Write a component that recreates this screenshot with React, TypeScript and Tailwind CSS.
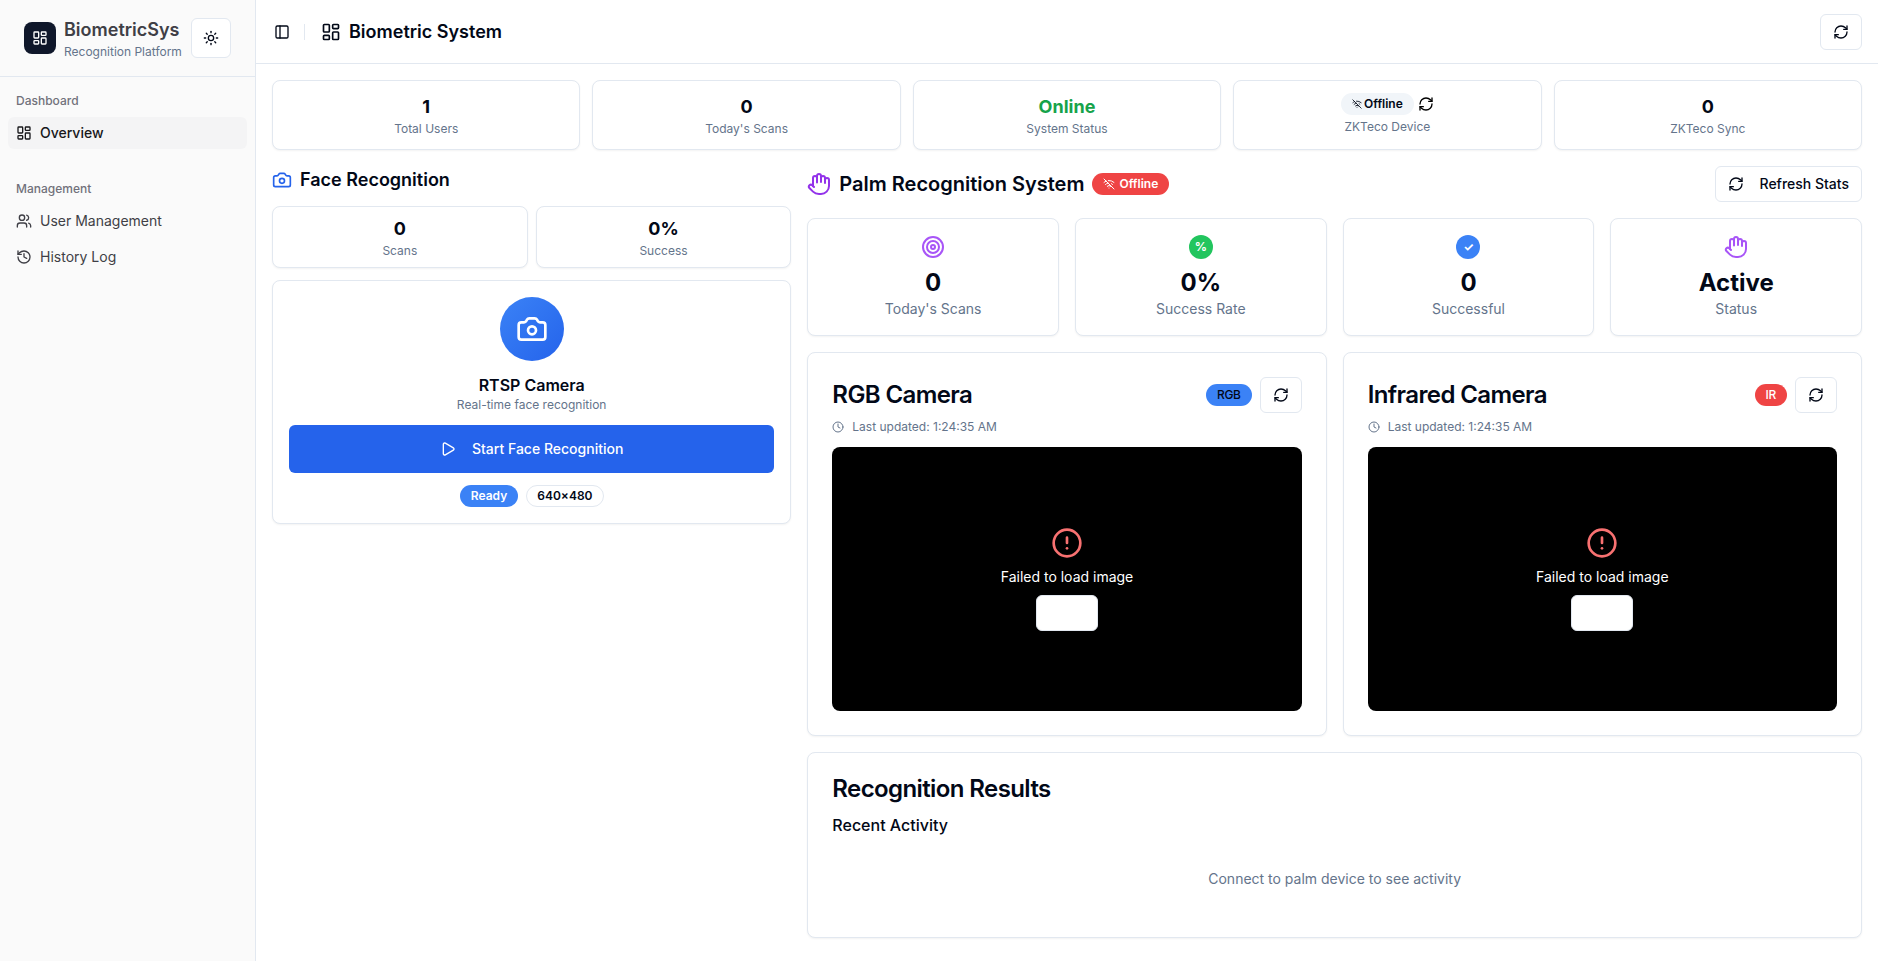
import React from "react";
import {
  AlertCircle,
  Camera,
  Clock,
  Hand,
  History,
  LayoutDashboard,
  PanelLeft,
  Play,
  RefreshCw,
  Sun,
  Target,
  Users,
  WifiOff,
} from "lucide-react";

const card = "rounded-lg border border-[#e2e8f0] bg-white shadow-[0_1px_2px_0_rgba(0,0,0,0.05)]";
const outlineBtn =
  "inline-flex h-9 items-center justify-center rounded-md border border-[#e2e8f0] bg-white px-3 text-sm font-medium text-[#020817]";

const Stat = ({ value, label, color = "text-[#020817]", pad = "p-3" }: { value: string; label: string; color?: string; pad?: string }) => (
  <div className={`${card} ${pad} text-center`}>
    <div className={`text-lg font-bold ${color}`}>{value}</div>
    <div className="text-xs text-[#64748b]">{label}</div>
  </div>
);

const PalmStat = ({ icon, value, label }: { icon: React.ReactNode; value: string; label: string }) => (
  <div className={`${card} flex flex-col items-center p-4`}>
    <div className="mb-2 flex h-6 items-center justify-center">{icon}</div>
    <div className="text-2xl font-bold text-[#020817]">{value}</div>
    <div className="text-sm text-[#64748b]">{label}</div>
  </div>
);

const CameraCard = ({ title, badge, badgeClass }: { title: string; badge: string; badgeClass: string }) => (
  <div className={`${card} p-6`}>
    <div className="flex items-center justify-between">
      <h3 className="text-2xl leading-none font-semibold tracking-tight text-[#020817]">{title}</h3>
      <div className="flex items-center gap-2">
        <span className={`rounded-full border border-transparent px-2.5 py-0.5 text-xs font-medium tracking-tight ${badgeClass}`}>{badge}</span>
        <button className={outlineBtn}>
          <RefreshCw className="h-4 w-4" />
        </button>
      </div>
    </div>
    <div className="mt-1.5 flex items-center gap-2 text-xs text-[#64748b]">
      <Clock className="h-3 w-3" />
      Last updated: 1:24:35 AM
    </div>
    <div className="mt-3 flex aspect-video flex-col items-center justify-center rounded-lg bg-black">
      <AlertCircle className="mb-2 h-8 w-8 text-[#f87171]" />
      <div className="mb-2 text-sm text-white">Failed to load image</div>
      <button className="h-9 w-[62px] rounded-md border border-[#e2e8f0] bg-white" />
    </div>
  </div>
);

const NavItem = ({ icon, label, active }: { icon: React.ReactNode; label: string; active?: boolean }) => (
  <div className={`flex h-8 items-center gap-2 rounded-md px-2 text-sm ${active ? "bg-[#f4f4f5] font-medium text-[#18181b]" : "text-[#3f3f46]"}`}>
    {icon}
    {label}
  </div>
);

const App = () => {
  return (
    <div className="flex min-h-screen bg-white font-['Inter',sans-serif] text-[#020817]">
      <aside className="w-64 shrink-0 border-r border-[#e2e8f0] bg-[#fafafa]">
        <div className="flex h-[77px] items-center justify-between border-b border-[#e2e8f0] pr-6 pb-px pl-6">
          <div className="flex items-center gap-2">
            <div className="flex h-8 w-8 items-center justify-center rounded-lg bg-[#0f172a] text-white">
              <LayoutDashboard className="h-4 w-4" />
            </div>
            <div>
              <div className="text-lg font-semibold text-[#3f3f46]">BiometricSys</div>
              <div className="text-xs text-[#64748b]">Recognition Platform</div>
            </div>
          </div>
          <button className="flex h-10 w-10 items-center justify-center rounded-md border border-[#e2e8f0] bg-white">
            <Sun className="h-4 w-4" />
          </button>
        </div>
        <div className="flex flex-col gap-2">
          <div className="p-2">
            <div className="flex h-8 items-center px-2 text-xs font-medium text-[#71717a]">Dashboard</div>
            <NavItem active icon={<LayoutDashboard className="h-4 w-4" />} label="Overview" />
          </div>
          <div className="p-2">
            <div className="flex h-8 items-center px-2 text-xs font-medium text-[#71717a]">Management</div>
            <div className="flex flex-col gap-1">
              <NavItem icon={<Users className="h-4 w-4" />} label="User Management" />
              <NavItem icon={<History className="h-4 w-4" />} label="History Log" />
            </div>
          </div>
        </div>
      </aside>

      <div className="min-w-0 flex-1">
        <header className="flex h-16 items-center justify-between border-b border-[#e2e8f0] px-4">
          <div className="flex items-center">
            <div className="-ml-1 flex h-7 w-7 items-center justify-center">
              <PanelLeft className="h-4 w-4" />
            </div>
            <div className="mr-4 ml-2 h-4 w-px bg-[#e2e8f0]" />
            <div className="flex items-center gap-2">
              <LayoutDashboard className="h-5 w-5" />
              <span className="text-lg font-semibold">Biometric System</span>
            </div>
          </div>
          <button className={outlineBtn}>
            <RefreshCw className="h-4 w-4" />
          </button>
        </header>

        <main className="p-4">
          <div className="mb-4 grid grid-cols-5 gap-3">
            <Stat value="1" label="Total Users" />
            <Stat value="0" label="Today's Scans" />
            <Stat value="Online" label="System Status" color="text-[#16a34a]" />
            <div className={`${card} flex flex-col items-center p-3`}>
              <div className="mb-1 flex items-center gap-1">
                <span className="inline-flex items-center rounded-full border border-transparent bg-[#f1f5f9] px-2.5 py-0.5 text-xs font-semibold">
                  <WifiOff className="mr-0.5 h-2.5 w-2.5" />
                  Offline
                </span>
                <RefreshCw className="h-4 w-4 text-black" />
              </div>
              <div className="text-xs text-[#64748b]">ZKTeco Device</div>
            </div>
            <Stat value="0" label="ZKTeco Sync" />
          </div>

          <div className="grid grid-cols-3 gap-4">
            <div className="min-w-0">
              <div className="mb-3 flex h-7 items-center gap-2">
                <Camera className="h-5 w-5 text-[#2563eb]" />
                <h2 className="text-lg font-semibold">Face Recognition</h2>
              </div>
              <div className="mb-3 grid grid-cols-2 gap-2">
                <Stat value="0" label="Scans" pad="p-2" />
                <Stat value="0%" label="Success" pad="p-2" />
              </div>
              <div className={`${card} flex flex-col items-center p-4`}>
                <div className="mb-3 flex h-16 w-16 items-center justify-center rounded-full bg-gradient-to-br from-[#3b82f6] to-[#2563eb] text-white">
                  <Camera className="h-8 w-8" />
                </div>
                <div className="text-base font-semibold">RTSP Camera</div>
                <div className="text-xs text-[#64748b]">Real-time face recognition</div>
                <button className="mt-3 flex h-12 w-full items-center justify-center gap-2 rounded-md bg-[#2563eb] text-sm font-medium text-white">
                  <Play className="mr-2 h-4 w-4" />
                  Start Face Recognition
                </button>
                <div className="mt-3 flex items-center gap-2">
                  <span className="rounded-full border border-transparent bg-[#3b82f6] px-2.5 py-0.5 text-xs font-semibold text-white">Ready</span>
                  <span className="rounded-full border border-[#e2e8f0] px-2.5 py-0.5 text-xs font-semibold">640×480</span>
                </div>
              </div>
            </div>

            <div className="col-span-2 min-w-0">
              <div className="mb-4 flex items-center justify-between">
                <div className="flex items-center gap-2">
                  <Hand className="h-6 w-6 text-[#9333ea]" />
                  <h2 className="text-xl font-semibold">Palm Recognition System</h2>
                  <span className="inline-flex items-center rounded-full border border-transparent bg-[#ef4444] px-2.5 py-0.5 text-xs font-semibold text-white">
                    <WifiOff className="mr-1 h-3 w-3" />
                    Offline
                  </span>
                </div>
                <button className={`${outlineBtn} gap-4`}>
                  <RefreshCw className="h-4 w-4" />
                  Refresh Stats
                </button>
              </div>

              <div className="mb-4 grid grid-cols-4 gap-4">
                <PalmStat icon={<Target className="h-6 w-6 text-[#a855f7]" />} value="0" label="Today's Scans" />
                <PalmStat
                  icon={<div className="flex h-6 w-6 items-center justify-center rounded-full bg-[#22c55e] text-xs font-bold text-white">%</div>}
                  value="0%"
                  label="Success Rate"
                />
                <PalmStat
                  icon={<div className="flex h-6 w-6 items-center justify-center rounded-full bg-[#3b82f6] text-xs font-bold text-white">✓</div>}
                  value="0"
                  label="Successful"
                />
                <PalmStat icon={<Hand className="h-6 w-6 text-[#a855f7]" />} value="Active" label="Status" />
              </div>

              <div className="mb-4 grid grid-cols-2 gap-4">
                <CameraCard title="RGB Camera" badge="RGB" badgeClass="bg-[#3b82f6] text-[#020817]" />
                <CameraCard title="Infrared Camera" badge="IR" badgeClass="bg-[#ef4444] text-white" />
              </div>

              <div className={`${card} p-6`}>
                <h3 className="text-2xl leading-none font-semibold tracking-tight">Recognition Results</h3>
                <div className="mt-3 text-base font-medium">Recent Activity</div>
                <div className="mt-2 py-6 text-center text-sm text-[#64748b]">Connect to palm device to see activity</div>
              </div>
            </div>
          </div>
        </main>
      </div>
    </div>
  );
};

export default App;
